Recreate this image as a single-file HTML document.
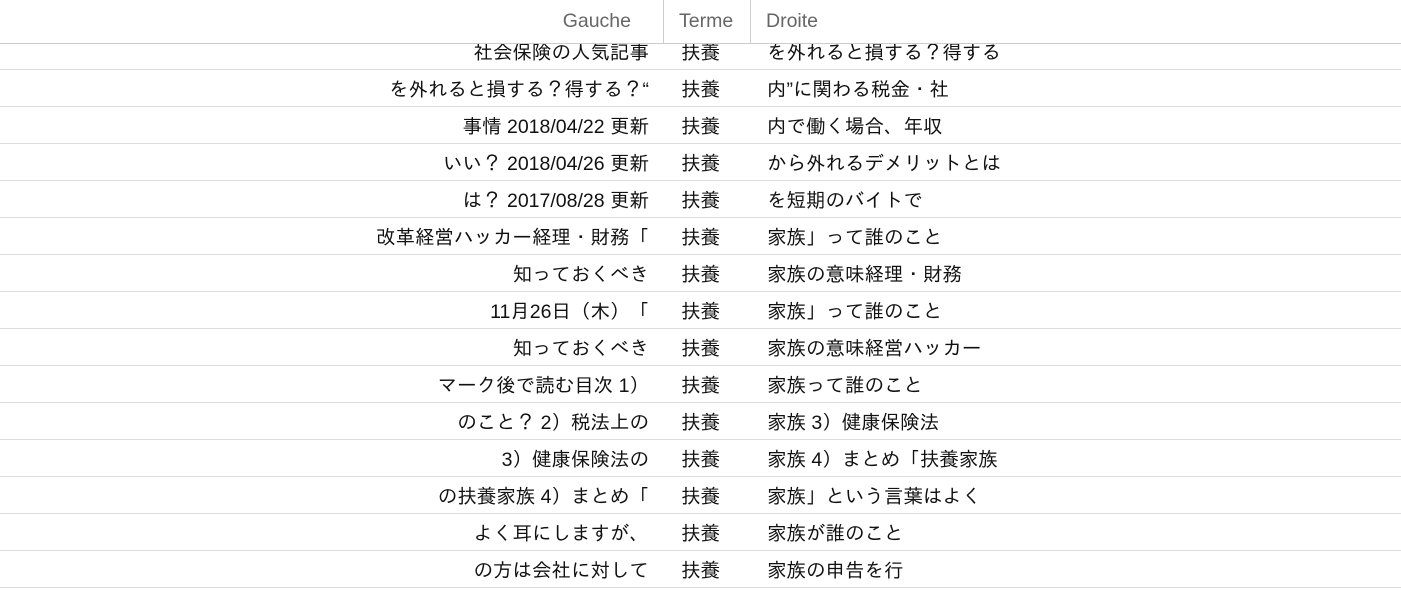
<!DOCTYPE html>
<html><head><meta charset="utf-8"><style>
body{margin:0;width:1401px;height:585px;overflow:hidden;background:#fff;font-family:"Liberation Sans","IPAGothic",sans-serif;font-size:19.5px;color:#111;position:relative}
.hd{position:absolute;top:0;left:0;width:1401px;height:43px;border-bottom:1px solid #ccc;background:#fff;color:#666;z-index:2;font-size:19.5px}
.hd div{position:absolute;top:0;height:43px;line-height:42px}
.vl{position:absolute;top:0;width:1px;height:43px;background:#ccc}
.row{position:absolute;left:0;width:1401px;height:36px;border-bottom:1px solid #ddd}
.row span{position:absolute;top:2px;line-height:37px;white-space:nowrap}
.l{right:752px}.t{left:681px}.r{left:767px}
</style></head><body>
<div class="hd"><div style="right:770px">Gauche</div><div style="left:679px">Terme</div><div style="left:766px">Droite</div><div class="vl" style="left:663px"></div><div class="vl" style="left:750px"></div></div>
<div class="row" style="top:33px"><span class="l">社会保険の人気記事</span><span class="t">扶養</span><span class="r">を外れると損する？得する</span></div>
<div class="row" style="top:70px"><span class="l">を外れると損する？得する？“</span><span class="t">扶養</span><span class="r">内”に関わる税金・社</span></div>
<div class="row" style="top:107px"><span class="l">事情 2018/04/22 更新</span><span class="t">扶養</span><span class="r">内で働く場合、年収</span></div>
<div class="row" style="top:144px"><span class="l">いい？ 2018/04/26 更新</span><span class="t">扶養</span><span class="r">から外れるデメリットとは</span></div>
<div class="row" style="top:181px"><span class="l">は？ 2017/08/28 更新</span><span class="t">扶養</span><span class="r">を短期のバイトで</span></div>
<div class="row" style="top:218px"><span class="l">改革経営ハッカー経理・財務「</span><span class="t">扶養</span><span class="r">家族」って誰のこと</span></div>
<div class="row" style="top:255px"><span class="l">知っておくべき</span><span class="t">扶養</span><span class="r">家族の意味経理・財務</span></div>
<div class="row" style="top:292px"><span class="l">11月26日（木）「</span><span class="t">扶養</span><span class="r">家族」って誰のこと</span></div>
<div class="row" style="top:329px"><span class="l">知っておくべき</span><span class="t">扶養</span><span class="r">家族の意味経営ハッカー</span></div>
<div class="row" style="top:366px"><span class="l">マーク後で読む目次 1）</span><span class="t">扶養</span><span class="r">家族って誰のこと</span></div>
<div class="row" style="top:403px"><span class="l">のこと？ 2）税法上の</span><span class="t">扶養</span><span class="r">家族 3）健康保険法</span></div>
<div class="row" style="top:440px"><span class="l">3）健康保険法の</span><span class="t">扶養</span><span class="r">家族 4）まとめ「扶養家族</span></div>
<div class="row" style="top:477px"><span class="l">の扶養家族 4）まとめ「</span><span class="t">扶養</span><span class="r">家族」という言葉はよく</span></div>
<div class="row" style="top:514px"><span class="l">よく耳にしますが、</span><span class="t">扶養</span><span class="r">家族が誰のこと</span></div>
<div class="row" style="top:551px"><span class="l">の方は会社に対して</span><span class="t">扶養</span><span class="r">家族の申告を行</span></div>
</body></html>
